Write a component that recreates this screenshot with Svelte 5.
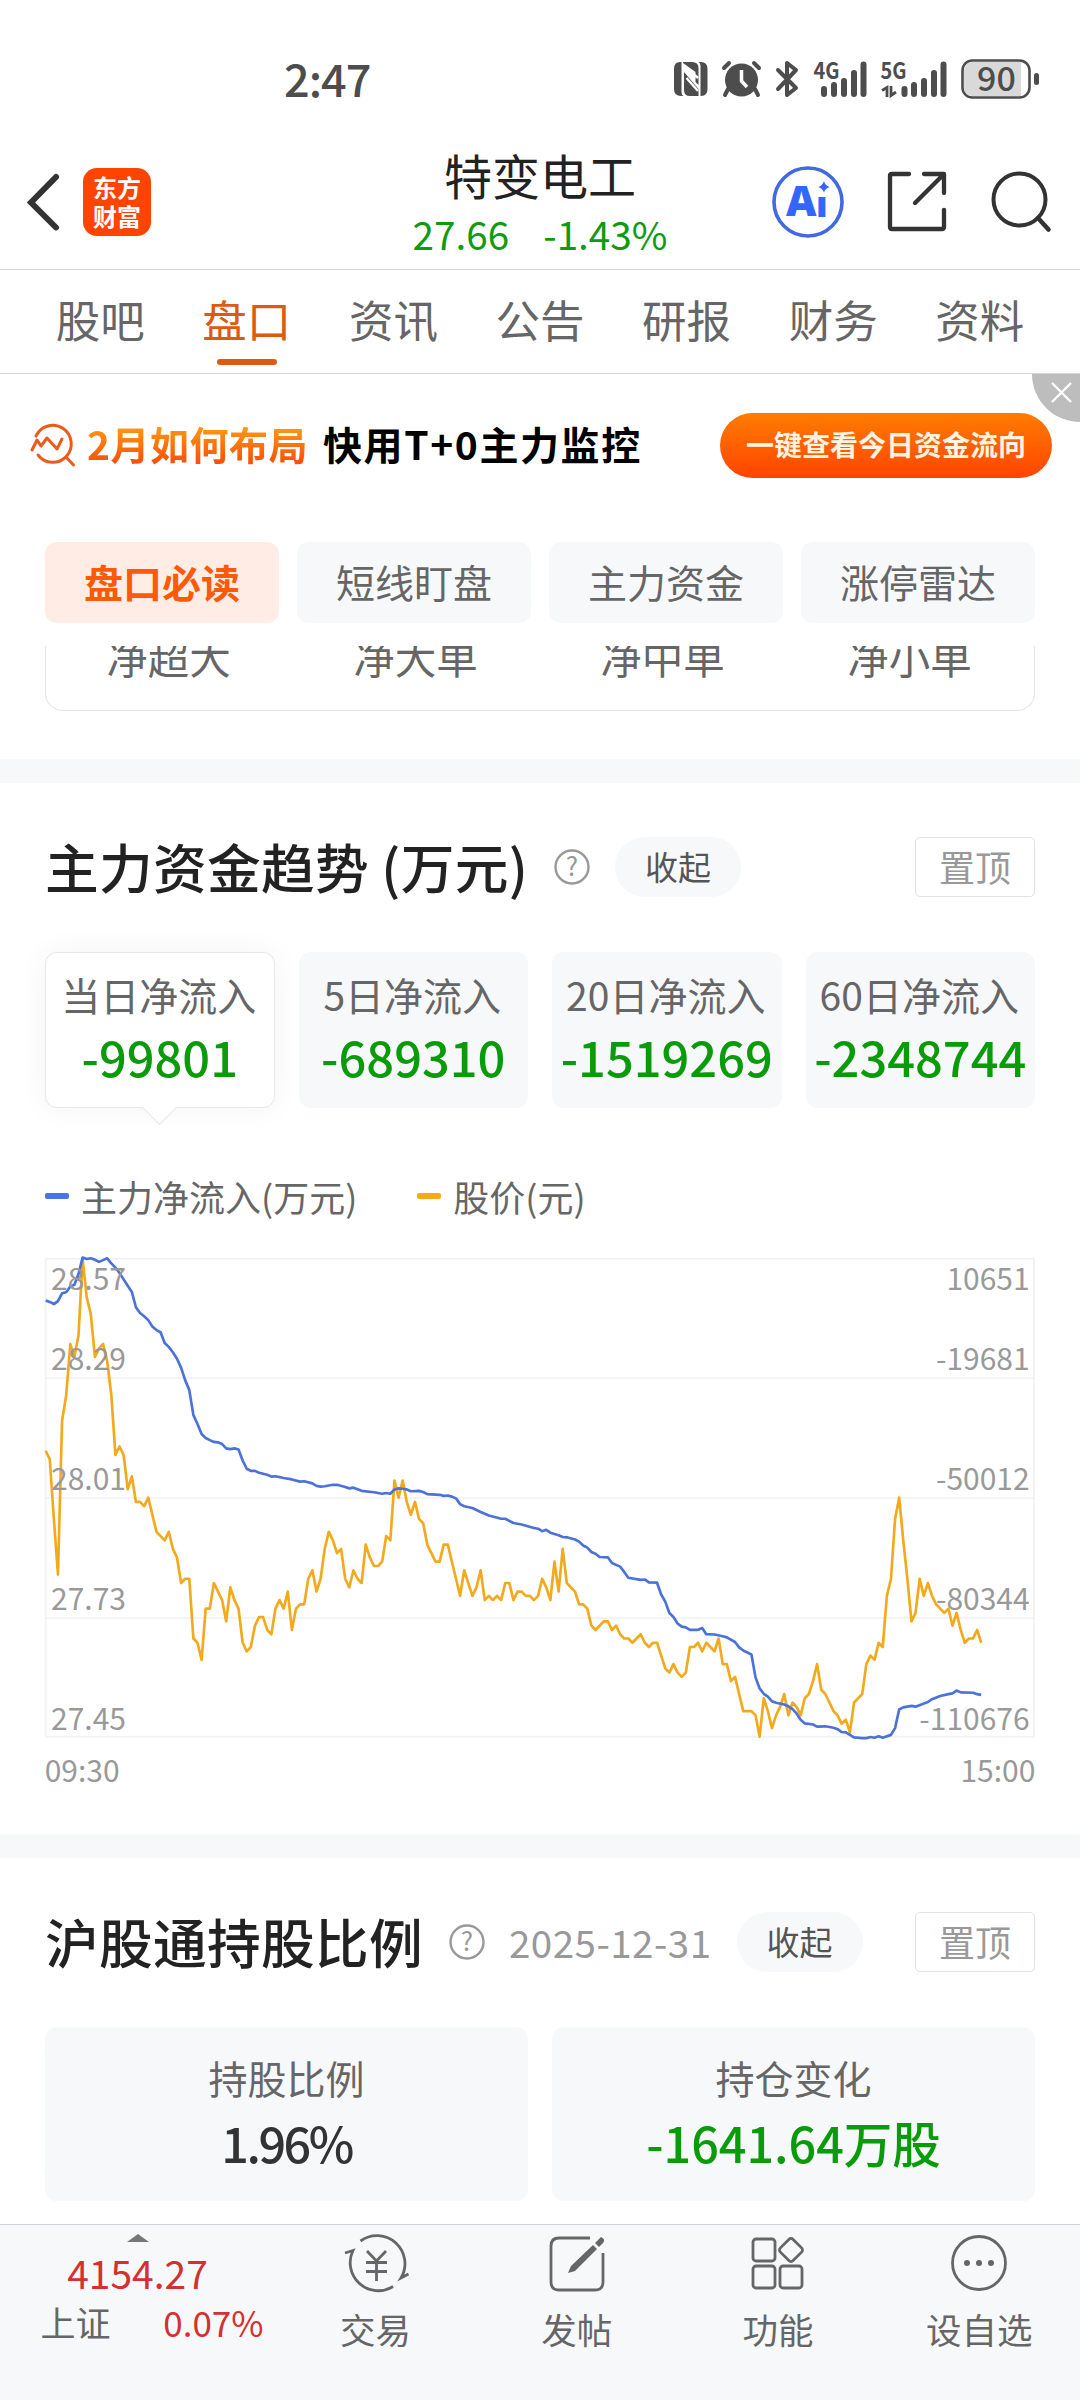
<script>
    const tabs = ['股吧', '盘口', '资讯', '公告', '研报', '财务', '资料'];
    const chips = ['盘口必读', '短线盯盘', '主力资金', '涨停雷达'];
    const orders = ['净超大', '净大单', '净中单', '净小单'];

    const flows = [
        { label: '当日净流入', value: '-99801' },
        { label: '5日净流入', value: '-689310' },
        { label: '20日净流入', value: '-1519269' },
        { label: '60日净流入', value: '-2348744' }
    ];

    let activeTab = '盘口';
    let activeChip = '盘口必读';
    let activeFlow = 0;

    // Chart geometry, viewBox units (3 per pixel)
    const LEFT = 137;
    const RIGHT = 3102;
    const TOP = 56;
    const HEIGHT = 1434;
    const STEP = 12.31;
    const gridY = [414, 774, 1134];

    const axis = [
        { y: 150, price: '28.57', flow: '10651' },
        { y: 389, price: '28.29', flow: '-19681' },
        { y: 749, price: '28.01', flow: '-50012' },
        { y: 1109, price: '27.73', flow: '-80344' },
        { y: 1469, price: '27.45', flow: '-110676' }
    ];

    // Price for each minute, in cents below 28.57 (112 cents from top to bottom)
    const price = [
        45, 47, 61, 74, 38, 32, 20, 23, 18, 0, 9, 13, 23, 21, 20, 24, 32, 46, 44, 46,
        54, 51, 57, 57, 58, 56, 60, 64, 65, 66, 64, 68, 70, 76, 75, 75, 89, 90, 94, 82,
        82, 76, 78, 80, 85, 77, 80, 82, 90, 92, 91, 86, 84, 84, 87, 88, 82, 80, 82, 78,
        87, 82, 81, 81, 75, 73, 78, 75, 68, 64, 66, 69, 68, 75, 77, 73, 75, 76, 67, 70,
        72, 72, 71, 65, 66, 52, 56, 52, 57, 60, 57, 61, 62, 67, 69, 71, 71, 67, 67, 71,
        75, 79, 73, 76, 79, 77, 73, 80, 79, 80, 79, 80, 76, 76, 80, 78, 78, 79, 79, 80,
        79, 75, 77, 80, 71, 78, 68, 76, 77, 78, 81, 81, 82, 86, 87, 86, 85, 85, 87, 86,
        88, 89, 89, 90, 89, 88, 90, 91, 90, 90, 93, 96, 97, 95, 97, 98, 97, 91, 91, 90,
        92, 90, 91, 92, 89, 95, 95, 99, 98, 102, 106, 106, 106, 107, 112, 103, 106, 110,
        107, 105, 102, 107, 104, 105, 107, 103, 102, 99, 95, 101, 102, 104, 106, 107,
        109, 108, 111, 104, 103, 102, 95, 93, 94, 90, 91, 79, 75, 61, 56, 66, 75, 85,
        83, 75, 79, 76, 79, 81, 82, 83, 82, 86, 83, 87, 90, 89, 89, 87, 90
    ];

    // Main net inflow, [minute, level]: level 52 is the top of the frame, 1390 the bottom
    const inflow = [
        [0, 169], [1, 173], [2, 179], [3, 171], [4, 149], [5, 146], [6, 130], [7, 125],
        [8, 95], [9, 49], [10, 53], [11, 51], [12, 55], [13, 61], [14, 56], [15, 51],
        [16, 65], [17, 77], [18, 92], [19, 110], [20, 128], [21, 145], [22, 188],
        [23, 204], [24, 213], [25, 224], [26, 242], [27, 252], [28, 258], [29, 288],
        [30, 299], [31, 314], [32, 332], [33, 357], [34, 392], [35, 420], [36, 490],
        [37, 515], [38, 543], [39, 554], [40, 560], [41, 565], [42, 566], [43, 571],
        [44, 583], [45, 585], [46, 583], [47, 586], [48, 617], [49, 640], [50, 646],
        [51, 646], [52, 651], [54, 657], [55, 662], [56, 661], [58, 666], [60, 670],
        [62, 676], [63, 675], [65, 681], [66, 688], [67, 690], [68, 689], [70, 685],
        [71, 685], [73, 691], [74, 695], [75, 693], [77, 702], [80, 706], [82, 710],
        [83, 708], [84, 710], [85, 698], [86, 695], [87, 696], [88, 698], [89, 703],
        [91, 702], [92, 705], [93, 711], [96, 713], [97, 716], [98, 715], [99, 718],
        [100, 723], [101, 739], [102, 745], [104, 750], [106, 761], [108, 771],
        [111, 780], [112, 780], [114, 792], [116, 796], [119, 806], [120, 808],
        [121, 815], [122, 811], [123, 819], [125, 826], [126, 831], [127, 832],
        [129, 838], [130, 844], [131, 855], [132, 861], [133, 873], [134, 878],
        [135, 887], [137, 888], [138, 904], [140, 914], [141, 929], [142, 945],
        [145, 951], [146, 950], [147, 958], [149, 959], [150, 992], [151, 1012],
        [152, 1044], [153, 1055], [154, 1073], [155, 1082], [156, 1084], [157, 1091],
        [159, 1091], [160, 1086], [161, 1103], [163, 1104], [165, 1109], [166, 1112],
        [168, 1125], [169, 1140], [170, 1149], [172, 1160], [173, 1224], [174, 1255],
        [175, 1270], [176, 1278], [177, 1291], [178, 1295], [180, 1300], [181, 1305],
        [182, 1313], [183, 1325], [184, 1343], [185, 1353], [187, 1356], [188, 1362],
        [190, 1361], [192, 1365], [193, 1369], [194, 1377], [195, 1378], [197, 1392],
        [199, 1394], [200, 1394], [201, 1391], [202, 1393], [203, 1389], [204, 1393],
        [206, 1385], [207, 1366], [208, 1314], [209, 1308], [211, 1304], [212, 1306],
        [215, 1293], [216, 1285], [218, 1276], [220, 1271], [221, 1269], [222, 1261],
        [223, 1266], [226, 1267], [227, 1271], [228, 1273]
    ];

    const point = (minute, share) =>
        `${(LEFT + minute * STEP).toFixed(1)},${(TOP + share * HEIGHT).toFixed(1)}`;
    const priceLine = price.map((p, i) => point(i, p / 112)).join(' ');
    const inflowLine = inflow.map(([i, level]) => point(i, (level - 52) / 1338)).join(' ');
</script>

<div class="screen">
    <div class="status">
        <span class="clock">2:47</span>
        <svg class="status-icons" width="372" height="44" viewBox="0 0 372 44">
            <g fill="#4d4d4d">
                <!-- NFC -->
                <path d="M10 4H11.500V34Q11.500 37 13.500 38H11Q4 38 4 31V11Q4 4 10 4Z" />
                <path d="M31 38H30.500V8Q30.500 5 28.500 4H31Q37.500 4 37.500 11V31Q37.500 38 31 38Z" />
                <path d="M13 4H22Q28.500 4 28.500 10V27L25.500 24V14L13 5Z" />
                <path d="M14 14L28.500 31V38H20Q14 38 14 32Z" />
                <!-- alarm -->
                <circle cx="71.500" cy="22" r="16.500" />
                <path d="M58 31L55 37M85 31L88 37M54 10L59 5M89 10L84 5" stroke="#4d4d4d" stroke-width="4" stroke-linecap="round" />
            </g>
            <path d="M13.500 7L28 20M16.500 20L28 33" stroke="#fff" stroke-width="2.400" />
            <path d="M71.500 12V23L77 29" fill="none" stroke="#fff" stroke-width="3.500" />
            <path d="M108 12L126 30L117 37V5L126 12L108 31" fill="none" stroke="#4d4d4d" stroke-width="4" stroke-linejoin="round" stroke-linecap="round" />
            <g class="net">
                <text x="143.500" y="21" textLength="26" lengthAdjust="spacingAndGlyphs">4G</text>
                <text x="210.500" y="21" textLength="26" lengthAdjust="spacingAndGlyphs">5G</text>
            </g>
            <g stroke="#4d4d4d" stroke-width="6" stroke-linecap="round">
                <path d="M154 31V36M164 27V36M174 23V36M184 15V36M193.500 6.500V36" />
                <path d="M234.500 31V36M244 27V36M254 23V36M264 15V36M273.500 6.500V36" />
            </g>
            <path d="M212 32.500L217 29.500V39M221 28V37.500L226 34" fill="none" stroke="#4d4d4d" stroke-width="2.800" />
            <rect x="292.500" y="2.500" width="67" height="37" rx="10" fill="#fff" stroke="#4d4d4d" stroke-width="2.600" />
            <path d="M303 4H351V38H303Q294 38 294 29V13Q294 4 303 4Z" fill="#d9d9d9" />
            <rect x="364" y="15" width="5" height="12" rx="2.500" fill="#4d4d4d" />
            <text class="battery" x="326.500" y="33" text-anchor="middle">90</text>
        </svg>
    </div>

    <header>
        <div class="left">
            <svg width="36" height="60" viewBox="0 0 36 60">
                <path d="M31 5L6 30.500L31 55.500" fill="none" stroke="#333" stroke-width="6" stroke-linecap="round" />
            </svg>
            <div class="logo"><span>东方</span><span>财富</span></div>
        </div>
        <div class="stock">
            <h1>特变电工</h1>
            <p><span>27.66</span><span>-1.43%</span></p>
        </div>
        <div class="actions">
            <svg width="74" height="76" viewBox="0 0 74 76">
                <circle cx="37" cy="38" r="34" fill="none" stroke="#4169e1" stroke-width="3.600" />
                <text class="ai" x="15" y="52">A<tspan x="45" y="53" font-size="36">ı</tspan></text>
                <path d="M53 17Q54 21.500 58.500 23Q54 24.500 53 28.500Q51.500 24.500 47.500 23Q51.500 21.500 53 17Z" fill="#3366ff" />
            </svg>
            <svg width="60" height="76" viewBox="0 0 60 76">
                <path d="M22 10H5Q3 10 3 12V63Q3 65 5 65H55Q57 65 57 63V46M37 10H57V29M56 11L28 39" fill="none" stroke="#333" stroke-width="4.300" stroke-linecap="round" stroke-linejoin="round" />
            </svg>
            <svg width="64" height="76" viewBox="0 0 64 76">
                <circle cx="30.500" cy="35.500" r="26" fill="none" stroke="#333" stroke-width="4" />
                <path d="M49 54L59.500 65.500" stroke="#333" stroke-width="4.500" stroke-linecap="round" />
            </svg>
        </div>
    </header>

    <nav class="tabs">
        {#each tabs as tab}
            <button class:active={tab === activeTab} on:click={() => (activeTab = tab)}>{tab}</button>
        {/each}
    </nav>

    <div class="banner">
        <svg width="48" height="48" viewBox="0 0 48 48" fill="none" stroke="#ec5a1c" stroke-width="3" stroke-linecap="round" stroke-linejoin="round">
            <path d="M7 15A18.500 18.500 0 1 1 9 34M37 36L44.500 44M3 29L8 19L12 25L18 17L28 28L33 18" />
        </svg>
        <strong class="hot">2月如何布局</strong>
        <strong>快用T+0主力监控</strong>
        <button class="cta">一键查看今日资金流向</button>
        <button class="close" aria-label="关闭">
            <svg width="48" height="48" viewBox="0 0 48 48">
                <path d="M20 9L39 28M39 9L20 28" stroke="#fff" stroke-width="2.300" />
            </svg>
        </button>
    </div>

    <div class="chips">
        {#each chips as chip}
            <button class:active={chip === activeChip} on:click={() => (activeChip = chip)}>{chip}</button>
        {/each}
    </div>

    <div class="orders">
        {#each orders as order}
            <span>{order}</span>
        {/each}
    </div>

    <section class="trend">
        <div class="title">
            <h2>主力资金趋势 (万元)</h2>
            <svg class="help" width="36" height="36" viewBox="0 0 36 36">
                <circle cx="18" cy="18" r="16.500" />
                <text x="18" y="27" text-anchor="middle">?</text>
            </svg>
            <button class="fold">收起</button>
            <button class="pin">置顶</button>
        </div>

        <div class="flows">
            {#each flows as flow, i}
                <button class:active={i === activeFlow} on:click={() => (activeFlow = i)}>
                    <span>{flow.label}</span>
                    <b>{flow.value}</b>
                </button>
            {/each}
        </div>

        <div class="legend">
            <span class="blue">主力净流入(万元)</span>
            <span class="gold">股价(元)</span>
        </div>

        <svg class="chart" width="1080" height="560" viewBox="0 0 3240 1680">
            <g fill="none" stroke="#f1f1f1" stroke-width="5">
                <rect x={LEFT} y={TOP} width={RIGHT - LEFT} height={HEIGHT} />
                {#each gridY as y}
                    <path d="M{LEFT} {y}H{RIGHT}" />
                {/each}
            </g>
            <polyline points={priceLine} stroke="#f2aa1c" />
            <polyline points={inflowLine} stroke="#4a72d8" />
            {#each axis as row}
                <text x="153" y={row.y}>{row.price}</text>
                <text x="3089" y={row.y} text-anchor="end">{row.flow}</text>
            {/each}
            <text x="134" y="1625">09:30</text>
            <text x="3106" y="1625" text-anchor="end">15:00</text>
        </svg>
    </section>

    <section class="holding">
        <div class="title">
            <h2>沪股通持股比例</h2>
            <svg class="help" width="36" height="36" viewBox="0 0 36 36">
                <circle cx="18" cy="18" r="16.500" />
                <text x="18" y="27" text-anchor="middle">?</text>
            </svg>
            <time>2025-12-31</time>
            <button class="fold">收起</button>
            <button class="pin">置顶</button>
        </div>
        <div class="cards">
            <div><span>持股比例</span><b class="ratio">1.96%</b></div>
            <div><span>持仓变化</span><b class="down">-1641.64万股</b></div>
        </div>
    </section>

    <footer>
        <div class="index">
            <i></i>
            <b>4154.27</b>
            <p><span>上证</span><em>0.07%</em></p>
        </div>
        <button>
            <svg width="68" height="64" viewBox="0 0 68 64">
                <path d="M18.500 10A28 28 0 0 1 59 47L66.500 43M3 22L11 19.500A28 28 0 0 0 51 55.500" />
                <path d="M25 20L34.500 30L44 20M24 31.500H45M24 40.500H45M34.500 30V50" />
            </svg>
            交易
        </button>
        <button>
            <svg width="68" height="64" viewBox="0 0 68 64">
                <path d="M47 7H16Q8 7 8 15V51Q8 59 16 59H52Q60 59 60 51V22" />
                <path d="M58 6Q63 8 60 12L56 16L52 12ZM50 14L54 18L32 40L25 42L28 35Z" fill="#666" stroke="none" />
            </svg>
            发帖
        </button>
        <button>
            <svg width="68" height="64" viewBox="0 0 68 64">
                <rect x="9" y="8" width="22" height="22" rx="3" />
                <rect x="9" y="35" width="22" height="22" rx="3" />
                <rect x="36" y="35" width="22" height="22" rx="3" />
                <rect x="38" y="10" width="18" height="18" rx="3" transform="rotate(45 47 19)" />
            </svg>
            功能
        </button>
        <button>
            <svg width="68" height="64" viewBox="0 0 68 64">
                <circle cx="34" cy="32" r="26.500" />
                <g fill="#666" stroke="none">
                    <circle cx="22" cy="32" r="3" />
                    <circle cx="34" cy="32" r="3" />
                    <circle cx="46" cy="32" r="3" />
                </g>
            </svg>
            设自选
        </button>
    </footer>
</div>

<style>
    :global(body) {
        background: #fff;
    }

    .screen {
        width: 1080px;
        height: 2400px;
        display: flex;
        flex-direction: column;
        overflow: hidden;
        background: #fff;
        color: #666;
        font-family: 'Noto Sans CJK SC', 'Noto Sans', sans-serif;
        line-height: 1;
    }

    h1, h2, p {
        margin: 0;
        font-weight: 400;
    }

    button {
        padding: 0;
        border: none;
        background: none;
        color: inherit;
        font: inherit;
    }

    svg {
        display: block;
        flex: none;
        overflow: visible;
    }

    /* Status bar */
    .status {
        height: 138px;
        flex: none;
        box-sizing: border-box;
        padding: 58px 38px 0 284px;
        display: flex;
        justify-content: space-between;
        align-items: flex-start;
    }

    .clock {
        font-size: 45px;
        line-height: 40px;
        font-weight: 500;
        color: #4d4d4d;
        letter-spacing: -1px;
    }

    .net text {
        font-size: 23px;
        font-weight: 700;
        fill: #4d4d4d;
    }

    .battery {
        font-size: 34px;
        font-weight: 500;
        fill: #4d4d4d;
    }

    /* Header */
    header {
        height: 132px;
        flex: none;
        box-sizing: border-box;
        border-bottom: 1px solid #d6d6d6;
        display: flex;
        align-items: stretch;
    }

    .left {
        width: 340px;
        box-sizing: border-box;
        padding-left: 25px;
        padding-bottom: 3px;
        display: flex;
        align-items: center;
        gap: 22px;
    }

    .logo {
        width: 68px;
        height: 68px;
        border-radius: 14px;
        background: #ff4400;
        color: #fff;
        font-size: 24px;
        font-weight: 700;
        line-height: 29px;
        display: flex;
        flex-direction: column;
        align-items: center;
        justify-content: center;
        padding-bottom: 2px;
        box-sizing: border-box;
    }

    .stock {
        flex: 1;
        display: flex;
        flex-direction: column;
        align-items: center;
    }

    h1 {
        margin-top: 7px;
        font-size: 48px;
        line-height: 58px;
        color: #222;
    }

    .stock p {
        display: flex;
        gap: 34px;
        margin-top: 9px;
        font-size: 38.7px;
        line-height: 42px;
        color: #0f9b0f;
    }

    .actions {
        width: 340px;
        box-sizing: border-box;
        padding: 26px 27px 0 31px;
        display: flex;
        justify-content: space-between;
    }

    .ai {
        font-size: 42px;
        font-weight: 900;
        font-family: 'Open Sans', 'Noto Sans', sans-serif;
        fill: #3366ff;
    }

    /* Tabs */
    .tabs {
        height: 104px;
        flex: none;
        box-sizing: border-box;
        padding: 0 27px;
        border-bottom: 1px solid #d6d6d6;
        display: flex;
    }

    .tabs button {
        flex: 1;
        position: relative;
        height: 103px;
        padding-bottom: 4px;
        font-size: 44.5px;
    }

    .tabs .active {
        color: #dc5a12;
    }

    .tabs .active::after {
        content: '';
        position: absolute;
        left: 50%;
        bottom: 8px;
        width: 60px;
        height: 6px;
        margin-left: -30px;
        border-radius: 3px;
        background: #dc5a12;
    }

    /* Banner */
    .banner {
        position: relative;
        height: 142px;
        flex: none;
        box-sizing: border-box;
        padding: 0 28px 0 29px;
        display: flex;
        align-items: center;
        color: #000;
        font-size: 39px;
    }

    .banner strong {
        font-weight: 700;
        margin-left: 15px;
        padding-bottom: 5px;
        line-height: 50px;
        letter-spacing: 1.6px;
    }

    .banner .hot {
        margin-left: 10px;
        letter-spacing: 0.5px;
        background: linear-gradient(#ff9410 20%, #f85208 80%);
        -webkit-background-clip: text;
        background-clip: text;
        color: transparent;
    }

    .cta {
        width: 332px;
        height: 65px;
        margin-left: auto;
        padding-bottom: 2px;
        border-radius: 33px;
        background: linear-gradient(#ff7c00, #ff4400);
        color: #fff3e2;
        font-size: 28px;
        font-weight: 700;
    }

    .close {
        position: absolute;
        right: 0;
        top: 0;
        width: 48px;
        height: 48px;
        border-bottom-left-radius: 48px;
        background: #bdbdbd;
    }

    /* Chips */
    .chips {
        flex: none;
        margin-top: 26px;
        padding: 0 45px;
        display: flex;
        gap: 18px;
    }

    .chips button {
        flex: 1;
        height: 81px;
        padding-bottom: 3px;
        border-radius: 12px;
        background: #f7f8fa;
        font-size: 39px;
    }

    .chips .active {
        background: #ffece5;
        color: #fa5a0a;
        font-weight: 700;
    }

    .orders {
        flex: none;
        height: 65px;
        box-sizing: border-box;
        margin: 23px 45px 48px;
        border: 1px solid #e5e5e5;
        border-top: none;
        border-radius: 0 0 18px 18px;
        overflow: hidden;
        display: flex;
        font-size: 41.5px;
    }

    .orders span {
        flex: 1;
        text-align: center;
        line-height: 60px;
        margin-top: -20px;
        margin-left: -2px;
    }

    /* Sections */
    section {
        flex: none;
        border-top: 24px solid #f7f8fa;
    }

    .title {
        margin: 54px 45px 0;
        height: 60px;
        display: flex;
        align-items: center;
    }

    h2 {
        font-size: 53.7px;
        line-height: 58px;
        padding-bottom: 2px;
        font-weight: 500;
        color: #222;
        letter-spacing: 0.3px;
    }

    .help {
        margin-left: 26px;
    }

    .help circle {
        fill: none;
        stroke: #999;
        stroke-width: 2.4;
    }

    .help text {
        font-size: 26px;
        fill: #999;
    }

    time {
        margin-left: 24px;
        padding-bottom: 2px;
        font-size: 38.5px;
        color: #999;
        letter-spacing: 0.5px;
    }

    .fold {
        width: 126px;
        height: 60px;
        margin-left: 25px;
        padding-bottom: 2px;
        border-radius: 30px;
        background: #f7f8fa;
        color: #555;
        font-size: 33px;
    }

    .pin {
        width: 120px;
        height: 60px;
        margin-left: auto;
        padding-bottom: 2px;
        border: 1px solid #e2e2e2;
        border-radius: 5px;
        color: #999;
        font-size: 36px;
    }

    .flows {
        margin: 55px 45px 0;
        display: flex;
        gap: 24px;
    }

    .flows button {
        flex: 1;
        width: 0;
        height: 156px;
        position: relative;
        border-radius: 12px;
        background: #f7f8fa;
        display: flex;
        flex-direction: column;
        align-items: center;
        white-space: nowrap;
    }

    .flows span {
        margin-top: 17px;
        margin-left: -2px;
        font-size: 39px;
        line-height: 50px;
    }

    .flows b {
        margin-top: 9px;
        font-size: 48.8px;
        line-height: 56px;
        font-weight: 500;
        color: #0a9b0a;
    }

    .flows .active {
        background: #fff;
        box-shadow: inset 0 0 0 1px #e8e8e8, 0 0 30px rgba(0, 0, 0, 0.05);
    }

    .flows .active::after {
        content: '';
        position: absolute;
        left: 50%;
        bottom: -12px;
        width: 24px;
        height: 24px;
        margin-left: -13px;
        transform: rotate(45deg);
        background: linear-gradient(135deg, transparent 50%, #fff 50%);
        border: solid #e8e8e8;
        border-width: 0 1px 1px 0;
    }

    .legend {
        margin: 63px 45px 0;
        height: 50px;
        display: flex;
        gap: 60px;
        font-size: 36px;
        line-height: 50px;
    }

    .legend span {
        display: flex;
        align-items: center;
        gap: 12px;
    }

    .legend span::before {
        content: '';
        width: 24px;
        height: 6px;
        border-radius: 2px;
        background: #4a72e8;
    }

    .legend .gold::before {
        background: #f5a914;
    }

    .chart {
        margin-top: 19px;
        margin-bottom: 34px;
    }

    .chart polyline {
        fill: none;
        stroke-width: 8;
        stroke-linejoin: round;
    }

    .chart text {
        font-size: 90px;
        fill: #999;
    }

    .cards {
        margin: 55px 45px 0;
        display: flex;
        gap: 24px;
    }

    .cards div {
        flex: 1;
        height: 174px;
        border-radius: 12px;
        background: #f7f8fa;
        display: flex;
        flex-direction: column;
        align-items: center;
    }

    .cards span {
        margin-top: 25px;
        font-size: 39px;
        line-height: 50px;
    }

    .cards b {
        margin-top: 12px;
        font-size: 48.5px;
        line-height: 56px;
        font-weight: 500;
        color: #333;
    }

    .cards .ratio {
        letter-spacing: -2.5px;
    }

    .cards .down {
        color: #0a9b0a;
    }

    /* Bottom bar */
    footer {
        flex: none;
        height: 176px;
        box-sizing: border-box;
        margin-top: auto;
        border-top: 1px solid #d0d3da;
        background: #f7f8fa;
        display: flex;
    }

    .index {
        width: 275px;
        display: flex;
        flex-direction: column;
        align-items: center;
    }

    .index i {
        margin-top: 9px;
        border: 11px solid transparent;
        border-top: none;
        border-bottom: 8px solid #777;
    }

    .index b {
        margin-top: 8px;
        font-size: 39px;
        line-height: 44px;
        font-weight: 400;
        color: #d43030;
    }

    .index p {
        width: 223px;
        margin-top: 6px;
        margin-left: 29px;
        display: flex;
        justify-content: space-between;
        font-size: 35px;
        line-height: 44px;
    }

    .index em {
        font-style: normal;
        color: #d43030;
    }

    footer button {
        flex: 1;
        display: flex;
        flex-direction: column;
        align-items: center;
        font-size: 35.5px;
        line-height: 44px;
    }

    footer button svg {
        margin-top: 6px;
        margin-bottom: 12px;
        fill: none;
        stroke: #666;
        stroke-width: 2.8;
    }
</style>
